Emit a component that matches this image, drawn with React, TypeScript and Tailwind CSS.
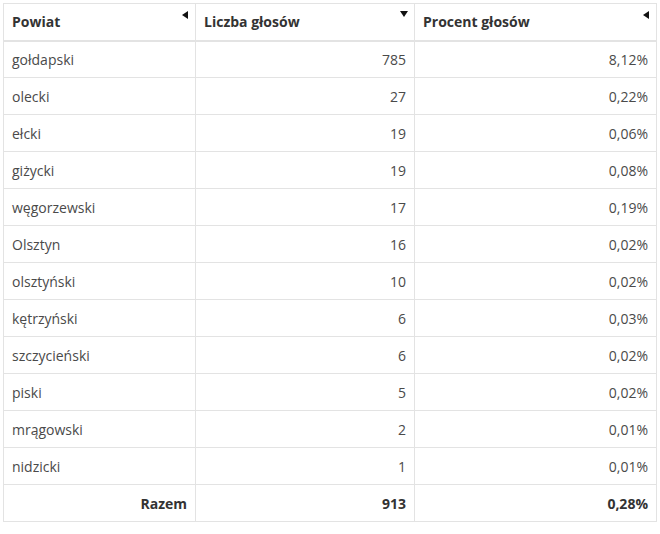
import React from "react";

const rows: [string, string, string][] = [
  ["gołdapski", "785", "8,12%"],
  ["olecki", "27", "0,22%"],
  ["ełcki", "19", "0,06%"],
  ["giżycki", "19", "0,08%"],
  ["węgorzewski", "17", "0,19%"],
  ["Olsztyn", "16", "0,02%"],
  ["olsztyński", "10", "0,02%"],
  ["kętrzyński", "6", "0,03%"],
  ["szczycieński", "6", "0,02%"],
  ["piski", "5", "0,02%"],
  ["mrągowski", "2", "0,01%"],
  ["nidzicki", "1", "0,01%"],
];

const LeftTri = () => (
  <svg width="6" height="8" viewBox="0 0 6 8" className="absolute right-[7px] top-[7px]">
    <polygon points="6,0 6,8 0,4" fill="#111" />
  </svg>
);
const DownTri = () => (
  <svg width="8" height="6" viewBox="0 0 8 6" className="absolute right-[6px] top-[7px]">
    <polygon points="0,0 8,0 4,6" fill="#111" />
  </svg>
);

export default function App() {
  return (
    <div className="w-[660px] h-[534px] bg-white pt-[3px] pl-[3px]" style={{ fontFamily: "'Open Sans', sans-serif" }}>
      <table className="border-collapse w-[653px] text-[14px] text-[#4a4a4a] table-fixed">
        <colgroup>
          <col className="w-[192px]" />
          <col className="w-[219px]" />
          <col className="w-[242px]" />
        </colgroup>
        <thead>
          <tr className="h-[37px]">
            <th className="relative border border-[#e3e3e3] border-b-2 border-b-[#e3e3e3] text-left font-bold text-[#333] px-[8px] align-middle">
              Powiat
              <LeftTri />
            </th>
            <th className="relative border border-[#e3e3e3] border-b-2 border-b-[#e3e3e3] text-left font-bold text-[#333] px-[8px] align-middle">
              Liczba głosów
              <DownTri />
            </th>
            <th className="relative border border-[#e3e3e3] border-b-2 border-b-[#e3e3e3] text-left font-bold text-[#333] px-[8px] align-middle">
              Procent głosów
              <LeftTri />
            </th>
          </tr>
        </thead>
        <tbody>
          {rows.map((r) => (
            <tr key={r[0]} className="h-[37px]">
              <td className="border border-[#e3e3e3] px-[8px] text-left">{r[0]}</td>
              <td className="border border-[#e3e3e3] px-[8px] text-right">{r[1]}</td>
              <td className="border border-[#e3e3e3] px-[8px] text-right">{r[2]}</td>
            </tr>
          ))}
          <tr className="h-[37px] font-bold text-[#333]">
            <td className="border border-[#e3e3e3] px-[8px] text-right">Razem</td>
            <td className="border border-[#e3e3e3] px-[8px] text-right">913</td>
            <td className="border border-[#e3e3e3] px-[8px] text-right">0,28%</td>
          </tr>
        </tbody>
      </table>
    </div>
  );
}
